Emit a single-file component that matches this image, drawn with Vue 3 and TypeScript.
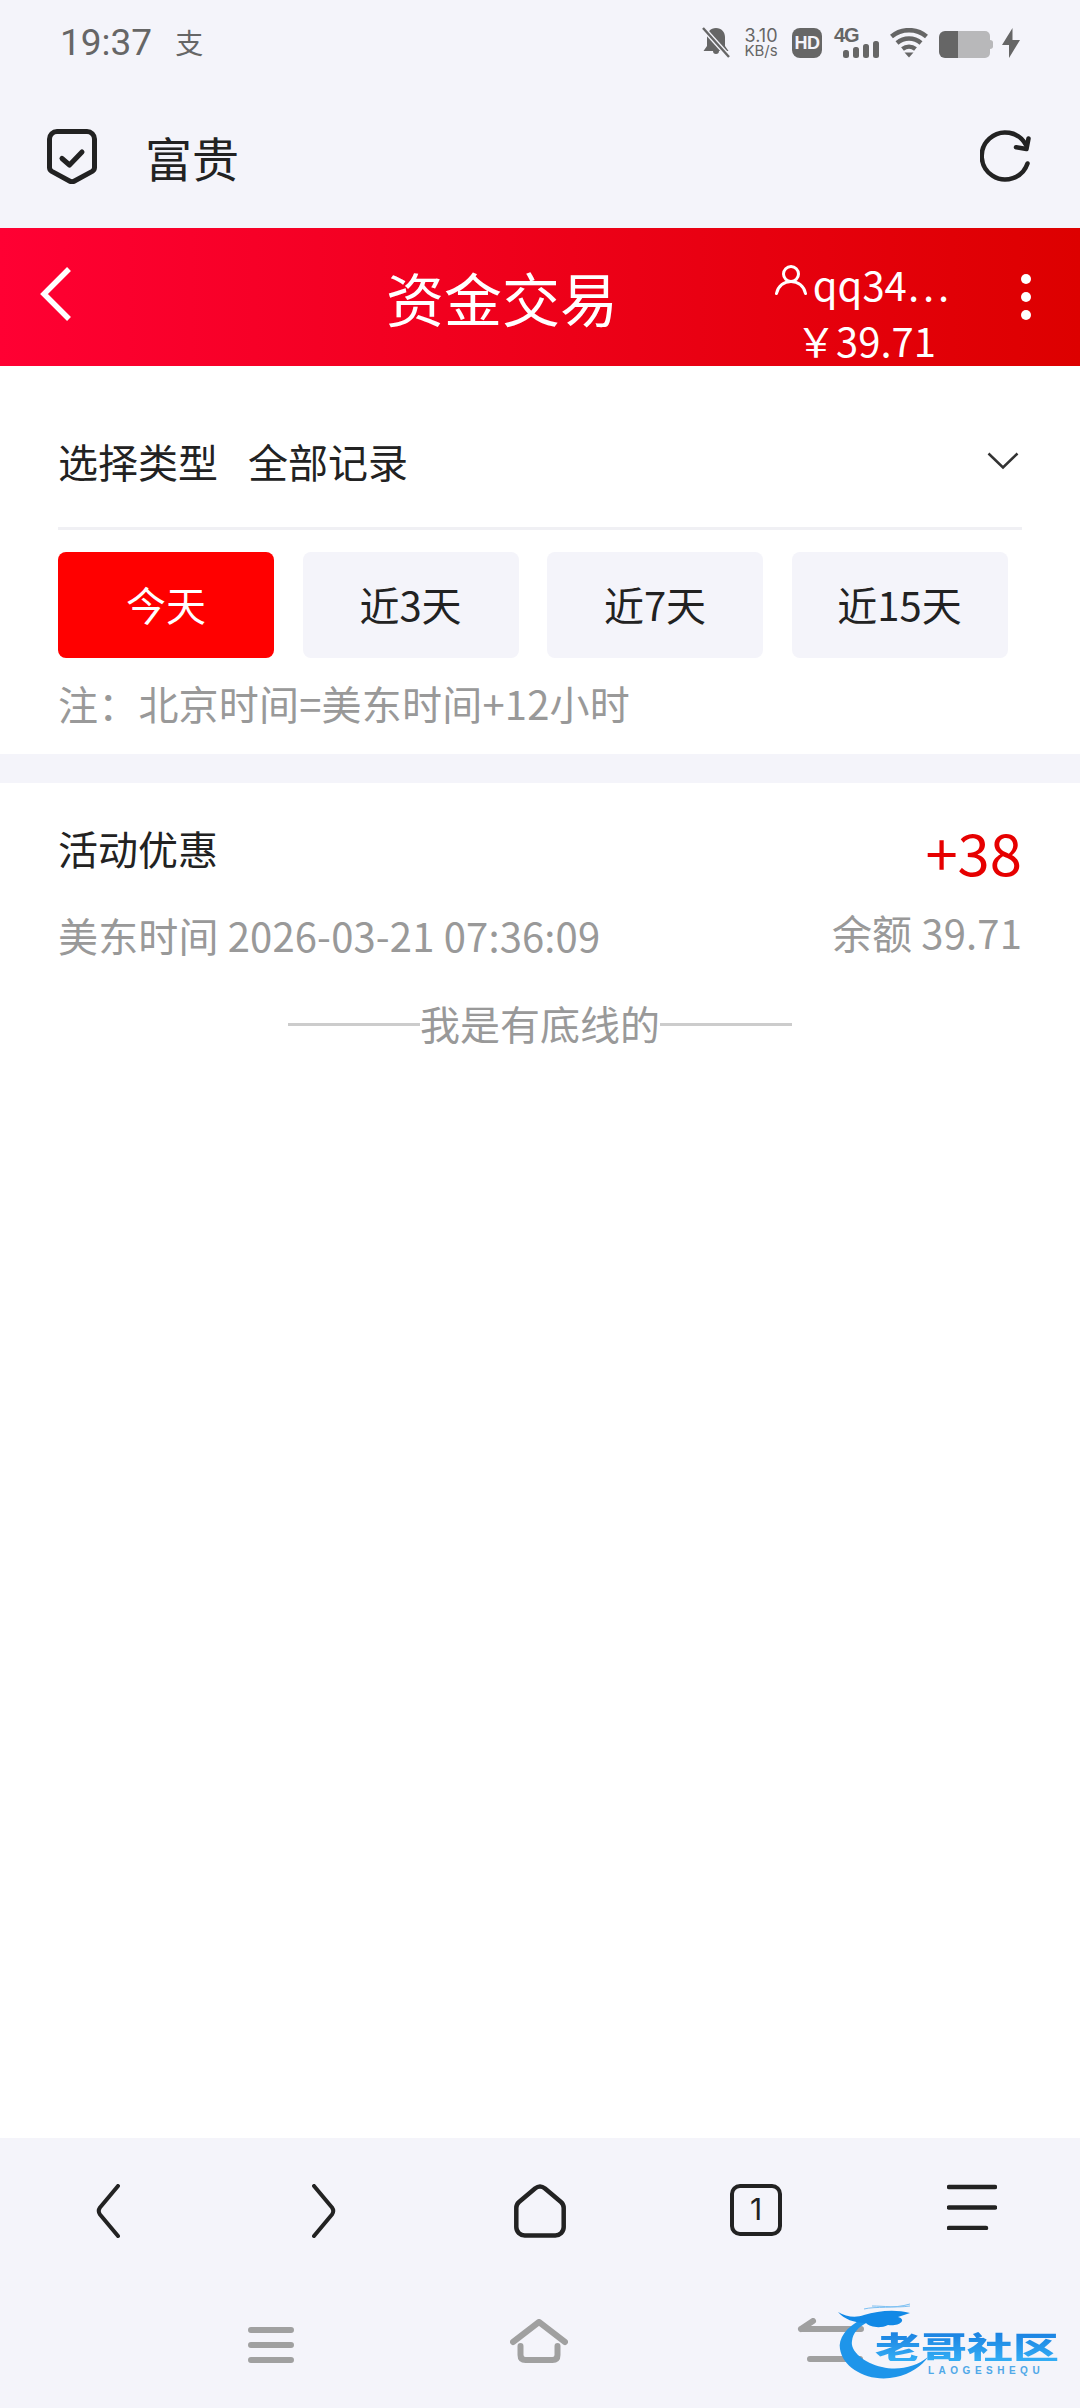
<script setup lang="ts">
import { ref } from "vue";

const ranges = ["今天", "近3天", "近7天", "近15天"];
const activeRange = ref(0);
</script>

<template>
  <div class="page">
    <div class="status-bar">
      <span class="clock">19:37</span>
      <span class="pay-mark">支</span>
      <div class="status-icons">
        <svg class="ic-bell" width="28" height="31" viewBox="0 0 28 31">
          <path d="M14 1c-5.500 0-9 4-9 9v9l-3.500 5h9.500a3 3 0 0 0 6 0h9.500l-3.500-5v-9c0-5-3.500-9-9-9z" fill="#666" />
          <path d="M1 1l26 29" stroke="#f4f4fa" stroke-width="5" />
          <path d="M1 1l26 29" stroke="#666" stroke-width="2.400" />
        </svg>
        <div class="speed"><span>3.10</span><span class="speed-unit">KB/s</span></div>
        <div class="hd">HD</div>
        <div class="signal">
          <span class="signal-type">4G</span>
          <svg class="signal-bars" width="36" height="17" viewBox="0 0 36 17" fill="#666">
            <rect x="0" y="9" width="6" height="8" rx="2.500" />
            <rect x="10" y="6" width="6" height="11" rx="2.500" />
            <rect x="20" y="3" width="6" height="14" rx="2.500" />
            <rect x="30" y="0" width="6" height="17" rx="2.500" />
          </svg>
        </div>
        <svg class="ic-wifi" width="38" height="30" viewBox="0 0 38 30" fill="none" stroke="#666" stroke-width="4.500">
          <path d="M1.500 8.500c10-8.500 25-8.500 35 0" />
          <path d="M7 15c7-6 17-6 24 0" />
          <path d="M12.500 21c3.800-3 9.200-3 13 0" />
          <path d="M14.500 24.500h9l-4.500 5z" fill="#666" stroke="none" />
        </svg>
        <svg class="ic-battery" width="54" height="27" viewBox="0 0 54 27">
          <path d="M6 0h40a5 5 0 0 1 5 5v17a5 5 0 0 1-5 5H6z" fill="#b8b8ba" />
          <path d="M51 9c2 0 3 1 3 2.500v4c0 1.500-1 2.500-3 2.500z" fill="#b8b8ba" />
          <path d="M19 0H6a6 6 0 0 0-6 6v15a6 6 0 0 0 6 6h13z" fill="#666" />
        </svg>
        <svg class="ic-bolt" width="18" height="30" viewBox="0 0 18 30">
          <path d="M10.500 0L0 17h7v13L18 12h-7.500z" fill="#666" />
        </svg>
      </div>
    </div>

    <div class="address-bar">
      <svg width="50" height="55" viewBox="0 0 50 55" fill="none" stroke="#222" stroke-width="5" stroke-linejoin="round" stroke-linecap="round">
        <path d="M10 2.500h30a7.500 7.500 0 0 1 7.500 7.500v28.500c0 1.800-.8 3-2.300 3.900L27.500 52a5 5 0 0 1-5 0L4.800 42.400c-1.500-.9-2.300-2.100-2.300-3.900V10A7.500 7.500 0 0 1 10 2.500z" />
        <path d="M15 29.500l7.500 6.500 12.500-13" />
      </svg>
      <span class="site-name">富贵</span>
      <svg class="reload" width="52" height="52" viewBox="0 0 52 52" fill="none" stroke="#222" stroke-width="4.500" stroke-linecap="round" stroke-linejoin="round">
        <path d="M47.500 33.500A23.500 23.500 0 1 1 46 15" />
        <path d="M48.500 8.500l-2 10.500-10.500-1.800" />
      </svg>
    </div>

    <header class="title-bar">
      <div class="title-back">
        <svg width="34" height="54" viewBox="0 0 34 54" fill="none" stroke="#fff" stroke-width="5.500">
          <path d="M30 2L5 27l25 25" />
        </svg>
      </div>
      <h1 class="title">资金交易</h1>
      <div class="title-right">
        <div class="account">
          <div class="account-name">
            <svg width="32" height="30" viewBox="0 0 32 30" fill="none" stroke="#fff" stroke-width="3" stroke-linecap="round">
              <circle cx="16" cy="9" r="7.500" />
              <path d="M1.500 28.500C3 21 9 16.500 16 16.500s13 4.500 14.500 12" />
            </svg>
            <span class="account-text">qq34⋯</span>
          </div>
          <div class="account-money">￥39.71</div>
        </div>
        <div class="more"><i></i><i></i><i></i></div>
      </div>
    </header>

    <main class="content">
      <div class="filters">
        <div class="type-row">
          <span>选择类型</span>
          <span class="type-value">全部记录</span>
          <svg class="type-arrow" width="32" height="18" viewBox="0 0 32 18" fill="none" stroke="#333" stroke-width="2.500">
            <path d="M1.500 1.500L16 15.500 30.500 1.500" />
          </svg>
        </div>
        <div class="ranges">
          <button
            v-for="(item, index) in ranges"
            :key="item"
            :class="['range', { active: activeRange === index }]"
            @click="activeRange = index"
          >
            {{ item }}
          </button>
        </div>
        <p class="note">注：北京时间=美东时间+12小时</p>
      </div>

      <div class="record">
        <div class="record-top">
          <span class="record-name">活动优惠</span>
          <span class="record-amount">+38</span>
        </div>
        <div class="record-bottom">
          <span>美东时间 2026-03-21 07:36:09</span>
          <span class="record-balance">余额 39.71</span>
        </div>
      </div>

      <div class="end-line"><span>我是有底线的</span></div>
    </main>

    <nav class="browser-nav">
      <svg width="24" height="54" viewBox="0 0 24 54" fill="none" stroke="#222" stroke-width="4" stroke-linecap="round" stroke-linejoin="round">
        <path d="M22 2L4 23.500q-2.500 3.500 0 7L22 52" />
      </svg>
      <svg width="24" height="54" viewBox="0 0 24 54" fill="none" stroke="#222" stroke-width="4" stroke-linecap="round" stroke-linejoin="round">
        <path d="M2 2l18 21.500q2.500 3.500 0 7L2 52" />
      </svg>
      <svg width="52" height="54" viewBox="0 0 52 54" fill="none" stroke="#222" stroke-width="4.500" stroke-linejoin="round">
        <path d="M21 4.500L5 18q-2.700 2.300-2.700 6v19A8.500 8.500 0 0 0 11 51.500h30a8.500 8.500 0 0 0 8.700-8.500V24q0-3.700-2.700-6L31 4.500q-5-4-10 0z" />
      </svg>
      <div class="tab-count">1</div>
      <svg width="50" height="46" viewBox="0 0 50 46" fill="none" stroke="#222" stroke-width="4.500" stroke-linecap="round">
        <path d="M2 3h46M2 23.500h46M2 44h37" />
      </svg>
    </nav>

    <div class="system-nav">
      <svg width="46" height="36" viewBox="0 0 46 36" fill="none" stroke="#a0a0a0" stroke-width="6" stroke-linecap="round">
        <path d="M3 3h40M3 18h40M3 33h40" />
      </svg>
      <svg width="58" height="46" viewBox="0 0 58 46" fill="none" stroke="#a0a0a0" stroke-width="6" stroke-linecap="round" stroke-linejoin="round">
        <path d="M3 23L29 3l26 20" />
        <path d="M10.500 27v9q0 5 5 5h27q5 0 5-5v-9" />
      </svg>
      <svg width="100" height="46" viewBox="0 0 100 46" fill="none" stroke="#a0a0a0" stroke-width="6" stroke-linecap="round" stroke-linejoin="round">
        <path d="M4 11h60M16 3L4 11M13 41h50" />
      </svg>
    </div>

    <div class="watermark">
      <svg class="dragon" width="106" height="80" viewBox="0 0 106 80">
        <path d="M24 16C8 24 0 36 2 46c3 20 30 34 56 28 14-3 26-11 32-20-12 10-30 14-46 10C26 60 12 48 14 38c1-8 6-14 16-19z" fill="#1e95ea" />
        <path d="M0 9c8 5 18 6 26 3 14-4 30-6 46-2l-12 4c10 3 0 10-10 8-8 4-18 2-22-2C16 20 6 16 0 9z" fill="#1289e6" />
        <path d="M26 6c12-3 30 0 46-5M34 3c12 0 24 2 38 0" fill="none" stroke="#7cc0f2" stroke-width="1" />
      </svg>
      <span class="wm-title">老哥社区</span>
      <span class="wm-sub">LAOGESHEQU</span>
    </div>
  </div>
</template>

<style>
html,
body {
  margin: 0;
  background: #fff;
}
</style>

<style scoped>
.page {
  position: relative;
  display: flex;
  flex-direction: column;
  width: 1080px;
  height: 2408px;
  overflow: hidden;
  background: #fff;
  color: #222;
  font-family: "Noto Sans CJK SC", "Noto Sans", sans-serif;
}

.status-bar {
  display: flex;
  align-items: center;
  height: 84px;
  padding: 0 60px;
  box-sizing: border-box;
  background: #f4f4fa;
  color: #666;
}

.clock {
  font-family: Roboto, sans-serif;
  font-size: 37px;
}

.pay-mark {
  margin-left: 23px;
  font-size: 28px;
  line-height: 1;
}

.status-icons {
  display: flex;
  align-items: flex-end;
  margin-left: auto;
}

.speed {
  display: flex;
  flex-direction: column;
  align-items: center;
  width: 38px;
  margin-left: 12px;
  font-family: Inter, sans-serif;
  font-size: 18px;
  line-height: 17px;
}

.speed-unit {
  font-size: 15px;
  line-height: 14px;
}

.hd {
  width: 30px;
  height: 30px;
  margin-left: 12px;
  border-radius: 8px;
  background: #666;
  color: #f4f4fa;
  font: 700 18px/30px "Liberation Sans", sans-serif;
  letter-spacing: -0.5px;
  text-align: center;
}

.signal {
  display: flex;
  flex-direction: column;
  align-items: flex-start;
  width: 44px;
  height: 30px;
  margin-left: 12px;
}

.signal-type {
  font: 700 20px/15px "Liberation Sans", sans-serif;
  letter-spacing: -1px;
}

.signal-bars {
  display: block;
  margin-top: -2px;
  margin-left: 9px;
}

.ic-wifi {
  margin-left: 12px;
}

.ic-battery {
  margin-left: 11px;
}

.ic-bolt {
  margin-left: 9px;
}

.address-bar {
  display: flex;
  align-items: center;
  height: 144px;
  padding: 0 48px 0 47px;
  box-sizing: border-box;
  background: #f4f4fa;
}

.site-name {
  margin-left: 48px;
  font-size: 47px;
  line-height: 1;
}

.reload {
  margin-left: auto;
}

.title-bar {
  display: grid;
  grid-template-columns: 386px auto 1fr;
  align-items: center;
  height: 138px;
  background: linear-gradient(to right, #ff0033, #dd0000);
  color: #fff;
}

.title-back {
  display: flex;
  padding-left: 39px;
  padding-bottom: 6px;
}

.title {
  margin: 0;
  font-size: 58px;
  font-weight: 400;
  line-height: 1;
}

.title-right {
  display: flex;
  justify-content: flex-end;
  align-items: center;
  padding-right: 49px;
}

.account {
  display: flex;
  flex-direction: column;
  align-items: center;
  width: 172px;
  padding-top: 30px;
  margin-right: 73px;
}

.account-name {
  display: flex;
  align-items: flex-start;
  height: 56px;
}

.account-name svg {
  margin-top: 3px;
  margin-right: 6px;
}

.account-text {
  font-size: 40px;
  line-height: 44px;
}

.account-money {
  margin-left: 8px;
  font-size: 40px;
  line-height: 44px;
  white-space: nowrap;
}

.more {
  display: flex;
  flex-direction: column;
  gap: 8px;
}

.more i {
  display: block;
  width: 10px;
  height: 10px;
  border-radius: 50%;
  background: #fff;
}

.content {
  flex: 1;
}

.filters {
  padding: 0 58px;
  border-bottom: 29px solid #f4f4fa;
}

.type-row {
  display: flex;
  align-items: center;
  height: 164px;
  padding-top: 28px;
  box-sizing: border-box;
  border-bottom: 3px solid #f0f0f4;
  font-size: 40px;
}

.type-value {
  margin-left: 30px;
}

.type-arrow {
  margin-left: auto;
  margin-right: 3px;
}

.ranges {
  display: flex;
  gap: 28.5px;
  margin-top: 22px;
}

.range {
  width: 216px;
  height: 106px;
  padding: 0 0 3px;
  border: 0;
  border-radius: 8px;
  background: #f4f4fa;
  color: #222;
  font: inherit;
  font-size: 40px;
}

.range.active {
  background: #ff0000;
  color: #fff;
}

.note {
  margin: 0;
  padding: 24px 0 29px;
  color: #999;
  font-size: 40px;
  line-height: 43px;
  letter-spacing: 0.2px;
}

.record {
  padding: 0 58px;
}

.record-top {
  display: flex;
  justify-content: space-between;
  align-items: center;
  padding-top: 30px;
}

.record-name {
  margin-bottom: 6px;
  font-size: 40px;
  line-height: 56px;
}

.record-amount {
  color: #e60000;
  font-size: 58px;
  line-height: 76px;
}

.record-bottom {
  display: flex;
  justify-content: space-between;
  margin-top: 21px;
  color: #999;
  font-size: 40px;
  line-height: 50px;
  letter-spacing: 0.15px;
}

.record-balance {
  margin-top: -3px;
}

.end-line {
  display: flex;
  justify-content: center;
  margin-top: 35px;
  color: #999;
  font-size: 40px;
  line-height: 56px;
}

.end-line::before,
.end-line::after {
  content: "";
  align-self: center;
  width: 132px;
  height: 3px;
  margin-top: 2px;
  background: #ccc;
}

.browser-nav {
  display: grid;
  grid-template-columns: repeat(5, 216px);
  justify-items: center;
  align-items: start;
  height: 130px;
  padding-top: 46px;
  box-sizing: border-box;
  background: #f4f4fa;
}

.tab-count {
  width: 52px;
  height: 52px;
  box-sizing: border-box;
  border: 4.500px solid #222;
  border-radius: 10px;
  color: #222;
  font: 400 30px/43px Inter, sans-serif;
  text-align: center;
}

.system-nav {
  display: flex;
  align-items: flex-start;
  height: 140px;
  padding: 59px 0 0 248px;
  box-sizing: border-box;
  background: #f4f4fa;
}

.system-nav svg:nth-child(2) {
  margin-top: -8px;
  margin-left: 216px;
}

.system-nav svg:nth-child(3) {
  margin-top: -9px;
  margin-left: 229px;
}

.watermark {
  position: absolute;
  left: 838px;
  top: 2303px;
  width: 225px;
  height: 80px;
}

.dragon {
  position: absolute;
  left: 0;
  top: 0;
}

.wm-title {
  position: absolute;
  left: 37px;
  top: 20px;
  background: linear-gradient(to bottom, #1a7fe0, #33aef5);
  -webkit-background-clip: text;
  background-clip: text;
  color: transparent;
  font-size: 46px;
  font-weight: 900;
  line-height: 46px;
  white-space: nowrap;
  transform: scaleY(0.66);
}

.wm-sub {
  position: absolute;
  left: 90px;
  top: 63px;
  color: #4fa8e8;
  font: 700 10px/1 "Liberation Sans", sans-serif;
  letter-spacing: 4.500px;
}
</style>
